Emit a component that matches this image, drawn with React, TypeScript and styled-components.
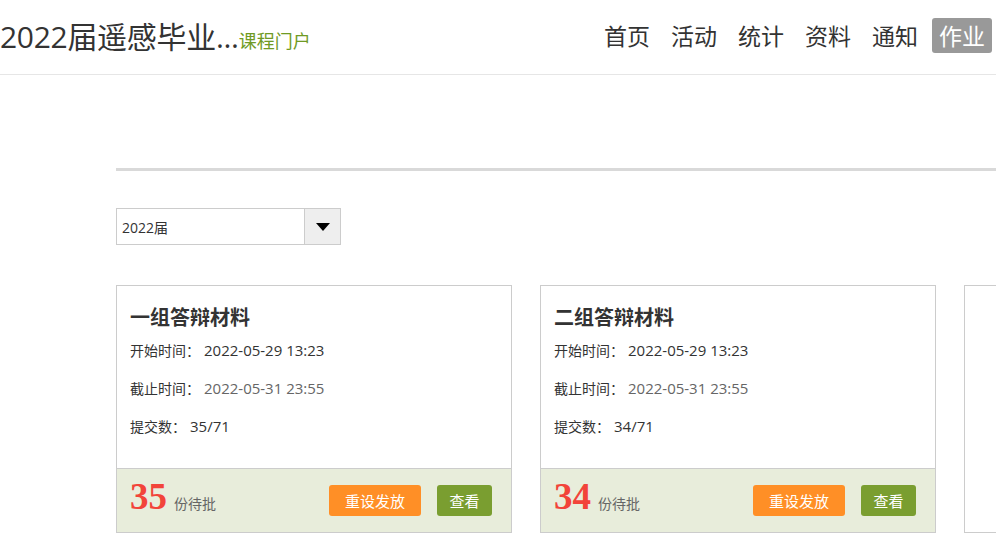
import React from 'react';
import styled, { createGlobalStyle } from 'styled-components';

const GlobalStyle = createGlobalStyle`
  html, body {
    margin: 0;
    padding: 0;
    background: #fff;
    overflow: hidden;
  }
  body {
    font-family: 'Open Sans', 'Noto Sans CJK SC', sans-serif;
    color: #333;
  }
`;

interface IHomework {
  id: number;
  title: string;
  start: string;
  end: string;
  submitted: number;
  total: number;
  pending: number;
}

const homeworks: IHomework[] = [
  { id: 1, title: '一组答辩材料', start: '2022-05-29 13:23', end: '2022-05-31 23:55', submitted: 35, total: 71, pending: 35 },
  { id: 2, title: '二组答辩材料', start: '2022-05-29 13:23', end: '2022-05-31 23:55', submitted: 34, total: 71, pending: 34 },
  { id: 3, title: '', start: '', end: '', submitted: 0, total: 0, pending: 0 },
];

const navItems = ['首页', '活动', '统计', '资料', '通知', '作业'];

const App = () => {
  return (
    <Page>
      <GlobalStyle />
      <Header>
        <Brand>
          <CourseName>2022届遥感毕业...</CourseName>
          <PortalLink>课程门户</PortalLink>
        </Brand>
        <Nav>
          {navItems.map((item) => (
            <NavItem key={item} active={item === '作业'}>
              {item}
            </NavItem>
          ))}
        </Nav>
      </Header>

      <Main>
        <Divider />
        <SelectBox>
          <SelectValue>2022届</SelectValue>
          <SelectArrow>
            <svg width="14" height="8" viewBox="0 0 14 8">
              <path d="M0 0 L14 0 L7 8 Z" fill="#000" />
            </svg>
          </SelectArrow>
        </SelectBox>

        <CardList>
          {homeworks.map((hw) =>
            hw.title ? (
              <Card key={hw.id}>
                <CardBody>
                  <CardTitle>{hw.title}</CardTitle>
                  <InfoRow>
                    <Label>开始时间：</Label>
                    <Value>{hw.start}</Value>
                  </InfoRow>
                  <InfoRow>
                    <Label>截止时间：</Label>
                    <Value muted>{hw.end}</Value>
                  </InfoRow>
                  <InfoRow>
                    <Label>提交数：</Label>
                    <Value>
                      {hw.submitted}/{hw.total}
                    </Value>
                  </InfoRow>
                </CardBody>
                <CardFooter>
                  <Pending>
                    <PendingCount>{hw.pending}</PendingCount>
                    <PendingText>份待批</PendingText>
                  </Pending>
                  <Actions>
                    <ActionButton color="#ff8f26" width={92}>
                      重设发放
                    </ActionButton>
                    <ActionButton color="#7a9e30" width={55}>
                      查看
                    </ActionButton>
                  </Actions>
                </CardFooter>
              </Card>
            ) : (
              <Card key={hw.id} />
            ),
          )}
        </CardList>
      </Main>
    </Page>
  );
};

export default App;

const Page = styled.div`
  width: 996px;
  height: 535px;
  overflow: hidden;
`;

const Header = styled.header`
  height: 74px;
  border-bottom: 1px solid #e6e6e6;
  display: flex;
  align-items: center;
  justify-content: space-between;
  padding-right: 4px;
`;

const Brand = styled.div`
  display: flex;
  align-items: baseline;
  margin-top: -4px;
`;

const CourseName = styled.span`
  font-size: 30px;
  color: #333;
  font-family: 'Open Sans', 'Noto Sans CJK SC', sans-serif;
  letter-spacing: -0.3px;
`;

const PortalLink = styled.a`
  font-size: 18px;
  color: #6f9a24;
  font-family: 'Noto Sans CJK SC', sans-serif;
`;

const Nav = styled.nav`
  display: flex;
  align-items: center;
  gap: 7px;
  margin-top: -4px;
`;

const NavItem = styled.a<{ active?: boolean }>`
  display: flex;
  align-items: center;
  height: 35px;
  padding: 0 7px;
  border-radius: 3px;
  font-size: 23px;
  font-family: 'Noto Sans CJK SC', sans-serif;
  color: ${({ active }) => (active ? '#fff' : '#333')};
  background: ${({ active }) => (active ? '#999' : 'transparent')};
`;

const Main = styled.main`
  padding: 93px 0 0 116px;
`;

const Divider = styled.div`
  height: 3px;
  background: #d9d9d9;
`;

const SelectBox = styled.div`
  margin-top: 37px;
  width: 225px;
  height: 37px;
  box-sizing: border-box;
  border: 1px solid #ccc;
  display: flex;
`;

const SelectValue = styled.div`
  flex: 1;
  display: flex;
  align-items: center;
  padding-left: 5px;
  font-size: 14px;
  color: #333;
`;

const SelectArrow = styled.div`
  width: 35px;
  background: #eee;
  border-left: 1px solid #ccc;
  display: flex;
  align-items: center;
  justify-content: center;
`;

const CardList = styled.div`
  margin-top: 40px;
  display: flex;
  gap: 28px;
`;

const Card = styled.div`
  flex: 0 0 396px;
  height: 248px;
  box-sizing: border-box;
  border: 1px solid #ccc;
  display: flex;
  flex-direction: column;
`;

const CardBody = styled.div`
  flex: 1;
  padding: 17px 13px 0;
`;

const CardTitle = styled.h3`
  margin: 0 0 8px;
  font-size: 20px;
  line-height: 28px;
  font-weight: bold;
  color: #333;
  font-family: 'Noto Sans CJK SC', sans-serif;
`;

const InfoRow = styled.div`
  display: flex;
  align-items: center;
  height: 38px;
  margin-top: -8px;
  margin-bottom: 8px;
`;

const Label = styled.span`
  font-size: 14px;
  color: #333;
  font-family: 'Noto Sans CJK SC', sans-serif;
`;

const Value = styled.span<{ muted?: boolean }>`
  margin-left: 4px;
  font-size: 15px;
  color: ${({ muted }) => (muted ? '#666' : '#333')};
`;

const CardFooter = styled.div`
  height: 64px;
  box-sizing: border-box;
  border-top: 1px solid #ccc;
  background: #e8eddb;
  display: flex;
  align-items: center;
  justify-content: space-between;
  padding: 0 19px 0 13px;
`;

const Pending = styled.div`
  display: flex;
  align-items: baseline;
  gap: 7px;
  margin-top: -9px;
`;

const PendingCount = styled.span`
  font-family: 'Liberation Serif', serif;
  font-weight: bold;
  font-size: 37px;
  line-height: 1;
  color: #f2443a;
`;

const PendingText = styled.span`
  font-size: 14px;
  color: #666;
  font-family: 'Noto Sans CJK SC', sans-serif;
`;

const Actions = styled.div`
  display: flex;
  gap: 16px;
`;

const ActionButton = styled.button<{ color: string; width: number }>`
  width: ${({ width }) => width}px;
  height: 31px;
  padding: 0;
  border: none;
  border-radius: 3px;
  background: ${({ color }) => color};
  color: #fff;
  font-size: 15px;
  font-family: 'Noto Sans CJK SC', sans-serif;
  cursor: pointer;
`;
